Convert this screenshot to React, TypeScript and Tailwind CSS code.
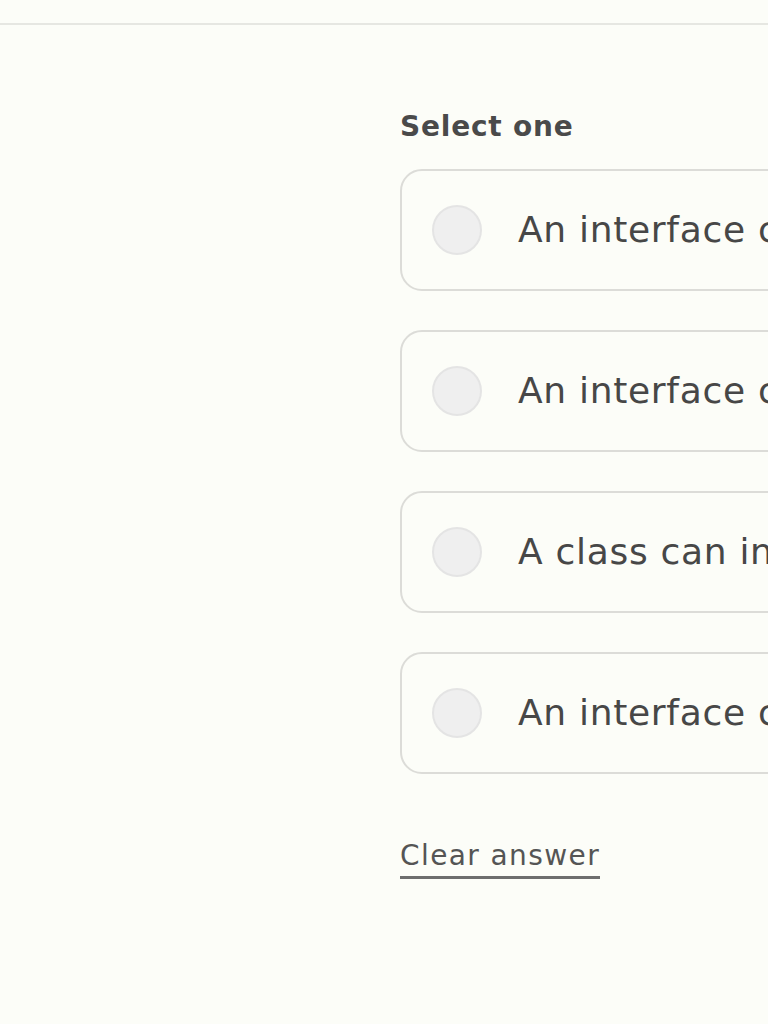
import { useState } from 'react';

const options = [
  'An interface can have constructors',
  'An interface can contain instance fields',
  'A class can inherit multiple interfaces',
  'An interface can be instantiated directly',
];

export default function App() {
  const [selected, setSelected] = useState<number | null>(null);

  return (
    <div className="h-[1024px] w-[768px] overflow-hidden bg-[#fcfdf8] font-['DejaVu_Sans',sans-serif]">
      {/* top bar edge */}
      <div className="h-[25px] border-b-2 border-[#e6e7e2]" />

      <div className="w-[1200px] pl-[400px] pt-[85px]">
        <div className="text-[28px] font-bold leading-[34px] tracking-[0.8px] text-[#4a4a4a]">Select one</div>

        <div className="mt-[25px] flex flex-col gap-[39px]">
          {options.map((o, i) => (
            <button
              key={o}
              type="button"
              onClick={() => setSelected(i)}
              className="flex h-[122px] items-center rounded-[22px] border-2 border-[#dcdcd8] bg-[#fcfdf8] pl-[30px] text-left"
            >
              <span className="flex h-[50px] w-[50px] shrink-0 items-center justify-center rounded-full border-2 border-[#e4e4e4] bg-[#efefef]">
                {selected === i && <span className="h-[22px] w-[22px] rounded-full bg-[#4a4a4a]" />}
              </span>
              <span className="ml-[36px] whitespace-nowrap text-[36px] leading-[42px] tracking-[0.7px] text-[#474747]">{o}</span>
            </button>
          ))}
        </div>

        <button
          type="button"
          onClick={() => setSelected(null)}
          className="mt-[67px] block border-b-[3px] border-[#6e6e6e] pb-[5px] text-[28px] leading-[30px] tracking-[1.4px] text-[#555555]"
        >
          Clear answer
        </button>
      </div>
    </div>
  );
}
